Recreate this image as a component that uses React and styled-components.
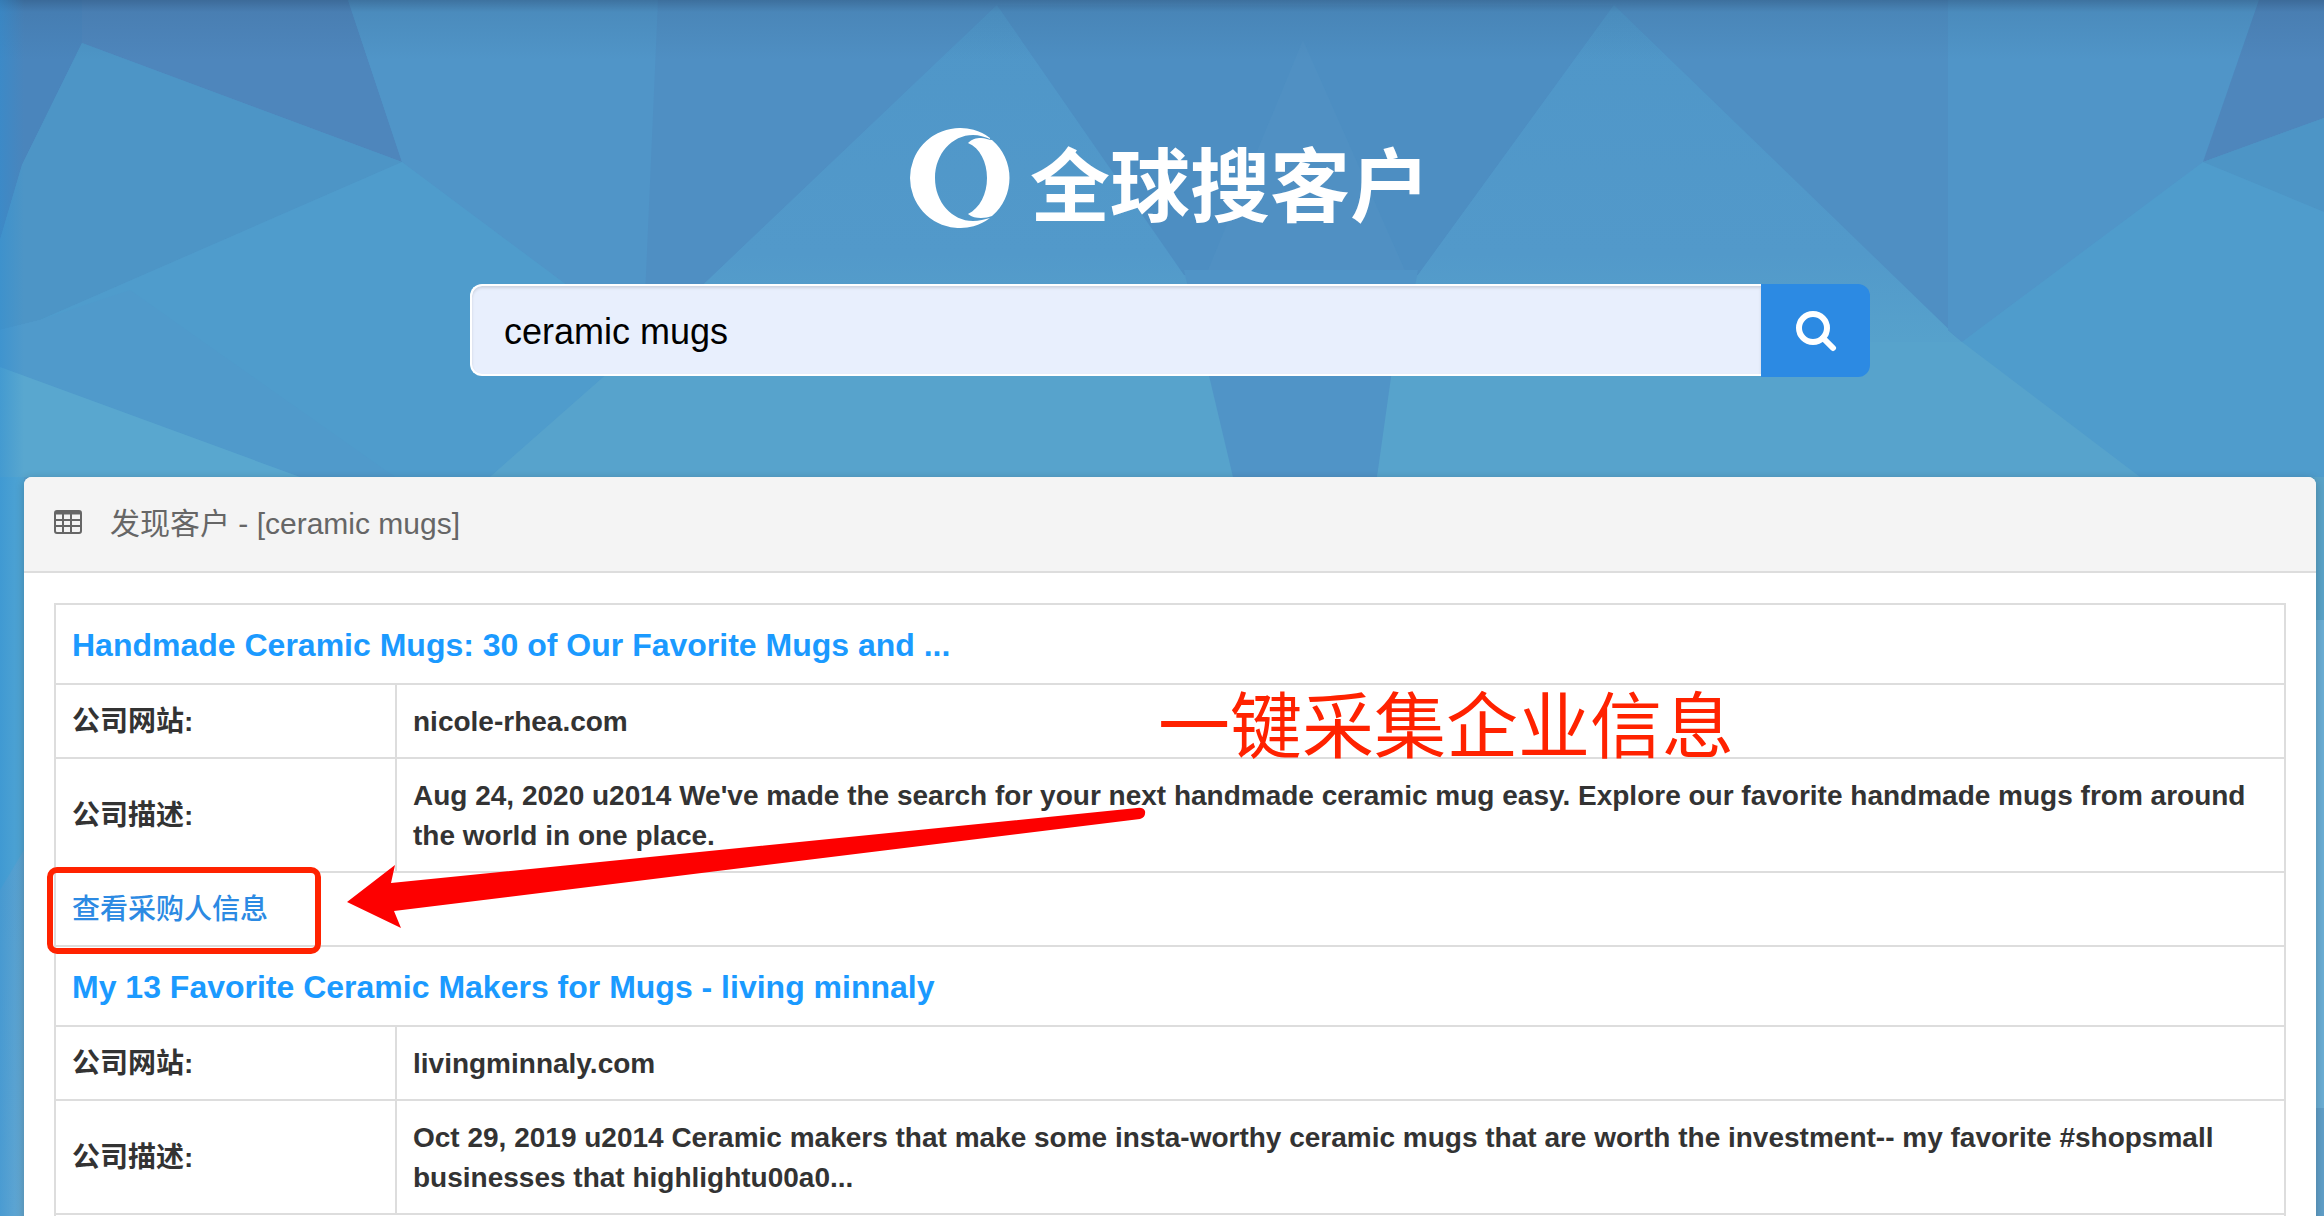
import styled, { createGlobalStyle } from "styled-components"

const results = [
    {
        title: "Handmade Ceramic Mugs: 30 of Our Favorite Mugs and ...",
        site: "nicole-rhea.com",
        description: "Aug 24, 2020 u2014 We've made the search for your next handmade ceramic mug easy. Explore our favorite handmade mugs from around the world in one place.",
        contact: "查看采购人信息",
    },
    {
        title: "My 13 Favorite Ceramic Makers for Mugs - living minnaly",
        site: "livingminnaly.com",
        description: "Oct 29, 2019 u2014 Ceramic makers that make some insta-worthy ceramic mugs that are worth the investment-- my favorite #shopsmall businesses that highlightu00a0...",
    },
]

export default function App() {
    return (
        <Page>
            <GlobalStyle />
            <Backdrop />

            <Brand>
                <Logo />
                <BrandName>全球搜客户</BrandName>
            </Brand>

            <SearchForm onSubmit={(e) => e.preventDefault()}>
                <SearchInput type="text" aria-label="搜索" defaultValue="ceramic mugs" />
                <SearchButton type="submit" aria-label="搜索">
                    <SearchIcon />
                </SearchButton>
            </SearchForm>

            <Panel>
                <PanelHeader>
                    <TableIcon />
                    <PanelTitle>发现客户 - [ceramic mugs]</PanelTitle>
                </PanelHeader>
                <PanelBody>
                    <TableArea>
                        <ResultTable>
                            <colgroup>
                                <LabelCol />
                                <col />
                            </colgroup>
                            {results.map((result) => (
                                <Result key={result.site} {...result} />
                            ))}
                        </ResultTable>
                        <Highlight />
                        <Arrow />
                        <Note>一键采集企业信息</Note>
                    </TableArea>
                </PanelBody>
            </Panel>
        </Page>
    )
}

function Result({ title, site, description, contact }) {
    return (
        <tbody>
            <tr>
                <Cell colSpan={2}>
                    <TitleLink href="#">{title}</TitleLink>
                </Cell>
            </tr>
            <tr>
                <LabelCell scope="row">公司网站:</LabelCell>
                <Cell>{site}</Cell>
            </tr>
            <tr>
                <LabelCell scope="row">公司描述:</LabelCell>
                <Cell>{description}</Cell>
            </tr>
            <tr>
                <Cell colSpan={2}>
                    {contact && <ContactLink href="#">{contact}</ContactLink>}
                </Cell>
            </tr>
        </tbody>
    )
}

function Backdrop() {
    return (
        <BackdropSvg viewBox="0 0 2324 1216" preserveAspectRatio="none" aria-hidden="true">
            <defs>
                <linearGradient id="base" x1="0" y1="0" x2="0" y2="1">
                    <stop offset="0" stopColor="#4f90c4" />
                    <stop offset="0.3" stopColor="#539ccb" />
                    <stop offset="1" stopColor="#66a9d2" />
                </linearGradient>
                <linearGradient id="peak" x1="0" y1="0" x2="0" y2="1">
                    <stop offset="0" stopColor="#4f96c8" />
                    <stop offset="0.7" stopColor="#5299ca" />
                    <stop offset="1" stopColor="#57a3cc" />
                </linearGradient>
                <linearGradient id="topShade" x1="0" y1="0" x2="0" y2="1">
                    <stop offset="0" stopColor="#2b4f76" stopOpacity="0.5" />
                    <stop offset="0.2" stopColor="#2b4f76" stopOpacity="0.14" />
                    <stop offset="1" stopColor="#2b4f76" stopOpacity="0" />
                </linearGradient>
                <linearGradient id="leftShade" x1="0" y1="0" x2="1" y2="0">
                    <stop offset="0" stopColor="#2f8ed2" stopOpacity="0.5" />
                    <stop offset="1" stopColor="#2f8ed2" stopOpacity="0" />
                </linearGradient>
            </defs>
            <rect width="2324" height="1216" fill="url(#base)" />
            {/* left half */}
            <polygon points="0,0 82,0 82,43 22,165 0,240" fill="#4a85bc" />
            <polygon points="82,0 348,0 402,162 82,43" fill="#4e86bc" />
            <polygon points="82,43 402,162 40,320 0,330 0,240 22,165" fill="#4d95c6" />
            <polygon points="348,0 658,0 658,330 643,342 402,162" fill="#5095c8" />
            <polygon points="658,0 997,5 643,342" fill="#4f8fc3" />
            <polygon points="402,162 643,342 490,477 300,477 0,367 0,330 40,320" fill="#4f9ccc" />
            <polygon points="40,320 130,290 395,477 300,477 0,367 0,330" fill="#509acb" />
            <polygon points="0,367 300,477 0,477" fill="#59a7cf" />
            <polygon points="643,342 490,477 1233,477 1214,342" fill="#57a3cc" />
            {/* centre */}
            <polygon points="997,5 1184,275 1214,360 643,342" fill="url(#peak)" />
            <polygon points="997,5 1614,5 1418,275 1184,275" fill="#4d8ec2" />
            <polygon points="1303,40 1407,275 1206,275" fill="#5090c3" />
            <polygon points="1184,270 1418,270 1377,477 1233,477" fill="#5094c7" />
            <polygon points="1614,5 1962,342 1396,360 1418,275" fill="url(#peak)" />
            {/* right half */}
            <polygon points="1614,5 1948,0 1948,330 1962,342" fill="#4f8fc3" />
            <polygon points="1948,0 2259,0 2203,162 1962,342 1948,330" fill="#5095c8" />
            <polygon points="2259,0 2324,0 2324,118 2203,162" fill="#4e86bc" />
            <polygon points="2203,162 2324,118 2324,212" fill="#4d95c6" />
            <polygon points="2203,162 2324,212 2324,477 2140,477 1962,342" fill="#4f9ccc" />
            <polygon points="1962,342 2140,477 1377,477 1396,342" fill="#57a3cc" />
            {/* strips beside the panel */}
            <polygon points="0,477 24,477 24,850 0,890" fill="#51a5d3" />
            <polygon points="2300,477 2324,477 2324,620 2300,620" fill="#5aa3c8" />
            <polygon points="2300,620 2324,620 2324,1108 2300,1108" fill="#6baed4" />
            <polygon points="2300,1108 2324,1108 2324,1216 2300,1216" fill="#609fc8" />
            <rect width="2324" height="60" fill="url(#topShade)" />
            <rect width="24" height="1216" fill="url(#leftShade)" />
        </BackdropSvg>
    )
}

function Logo() {
    return (
        <LogoSvg viewBox="0 0 100 100" aria-hidden="true">
            <path
                fill="#fff"
                d="M80 10A50 50 0 1 0 80 90C75 91 69 93 63 93C42 93 25 74 25 50S42 7 63 7C69 7 75 9 80 11z"
            />
            <path
                fill="#fff"
                d="M58 15C62 11 66 10 71 10C75 10 79 12 82 12A50 50 0 0 1 82 88C79 89 75 90 71 90C66 90 62 89 58 86C70 80 77 66 77 50S70 20 58 15z"
            />
        </LogoSvg>
    )
}

function SearchIcon() {
    return (
        <SearchSvg viewBox="0 0 42 42" fill="none" stroke="#fff" strokeLinecap="round" aria-hidden="true">
            <circle cx="18" cy="18" r="14" strokeWidth="6" />
            <path d="M28 28L38 38" strokeWidth="6" />
        </SearchSvg>
    )
}

function TableIcon() {
    return (
        <TableSvg viewBox="0 0 28 28" aria-hidden="true">
            <rect x="1" y="1" width="26" height="22" rx="2" fill="none" stroke="#666" strokeWidth="2" />
            <path d="M1 3h26" stroke="#666" strokeWidth="3" />
            <path d="M9 3v20M17 3v20M1 10h26M1 16h26" stroke="#666" strokeWidth="2" />
        </TableSvg>
    )
}

function Arrow() {
    return (
        <ArrowSvg viewBox="0 0 800 122" aria-hidden="true">
            <path fill="#fd0000" d="M0 95L48 58L44 76L790 1Q796 0 798 4Q799 10 793 12L47 104L54 121z" />
        </ArrowSvg>
    )
}

const GlobalStyle = createGlobalStyle`
    * {
        box-sizing: border-box;
    }

    body {
        margin: 0;
        font-family: "Liberation Sans", "Noto Sans CJK SC", sans-serif;
        color: #333;
    }
`

const Page = styled.main`
    position: relative;
    z-index: 0;
    height: 100vh;
    overflow: hidden;
    padding: 128px 8px 0 24px;
`

const BackdropSvg = styled.svg`
    position: absolute;
    inset: 0;
    z-index: -1;
    width: 100%;
    height: 100%;
`

const Brand = styled.header`
    display: flex;
    justify-content: center;
    align-items: center;
    gap: 20px;
    height: 100px;
`

const LogoSvg = styled.svg`
    width: 100px;
    height: 100px;
`

const BrandName = styled.h1`
    margin: 0;
    padding-top: 20px;
    font-size: 80px;
    line-height: 80px;
    font-weight: 700;
    color: #fff;
`

const SearchForm = styled.form`
    display: flex;
    width: 100%;
    max-width: 1400px;
    height: 93px;
    margin: 56px auto 100px;
`

const SearchInput = styled.input`
    flex: 1;
    min-width: 0;
    height: 92px;
    padding: 3px 32px 0;
    border: 2px solid #fff;
    border-right: 0;
    border-radius: 12px 0 0 12px;
    background-color: #e8effd;
    box-shadow: inset 0 2px 3px rgba(0, 0, 0, 0.12);
    font-family: inherit;
    font-size: 36px;
    color: #000;
    outline: none;
`

const SearchButton = styled.button`
    display: flex;
    align-items: center;
    justify-content: center;
    width: 109px;
    padding: 0;
    border: 0;
    border-radius: 0 12px 12px 0;
    background-color: #2c8ae3;
    cursor: pointer;
`

const SearchSvg = styled.svg`
    width: 42px;
    height: 42px;
`

const Panel = styled.section`
    border-radius: 8px;
    background-color: #fff;
    box-shadow: 0 2px 10px rgba(0, 0, 0, 0.22);
`

const PanelHeader = styled.div`
    display: flex;
    align-items: center;
    gap: 28px;
    height: 96px;
    padding: 0 30px;
    border-bottom: 2px solid #ddd;
    border-radius: 8px 8px 0 0;
    background-color: #f4f4f4;
`

const TableSvg = styled.svg`
    width: 28px;
    height: 28px;
`

const PanelTitle = styled.h2`
    margin: 0;
    font-size: 30px;
    line-height: 40px;
    font-weight: 400;
    color: #666;
`

const PanelBody = styled.div`
    padding: 30px;
`

const TableArea = styled.div`
    position: relative;
`

const ResultTable = styled.table`
    width: 100%;
    table-layout: fixed;
    border-collapse: collapse;
`

const LabelCol = styled.col`
    width: 341px;
`

const Cell = styled.td`
    padding: 17px 16px 15px;
    border: 2px solid #ddd;
    font-size: 28px;
    line-height: 40px;
    font-weight: 700;
    text-align: left;
    vertical-align: middle;
`

const LabelCell = styled(Cell).attrs({ as: "th" })``

const TitleLink = styled.a`
    display: block;
    font-size: 32px;
    line-height: 46px;
    color: #1b9aff;
    text-decoration: none;
`

const ContactLink = styled.a`
    display: block;
    font-weight: 500;
    color: #2c8ae3;
    text-decoration: none;
`

/* red marks drawn over the table */
const Highlight = styled.div`
    position: absolute;
    left: -7px;
    top: 264px;
    width: 274px;
    height: 87px;
    border: 6px solid #ff2200;
    border-radius: 10px;
`

const ArrowSvg = styled.svg`
    position: absolute;
    left: 293px;
    top: 204px;
    width: 800px;
    height: 122px;
`

const Note = styled.div`
    position: absolute;
    left: 1104px;
    top: 88px;
    font-size: 72px;
    line-height: 72px;
    white-space: nowrap;
    color: #ff2200;
`
